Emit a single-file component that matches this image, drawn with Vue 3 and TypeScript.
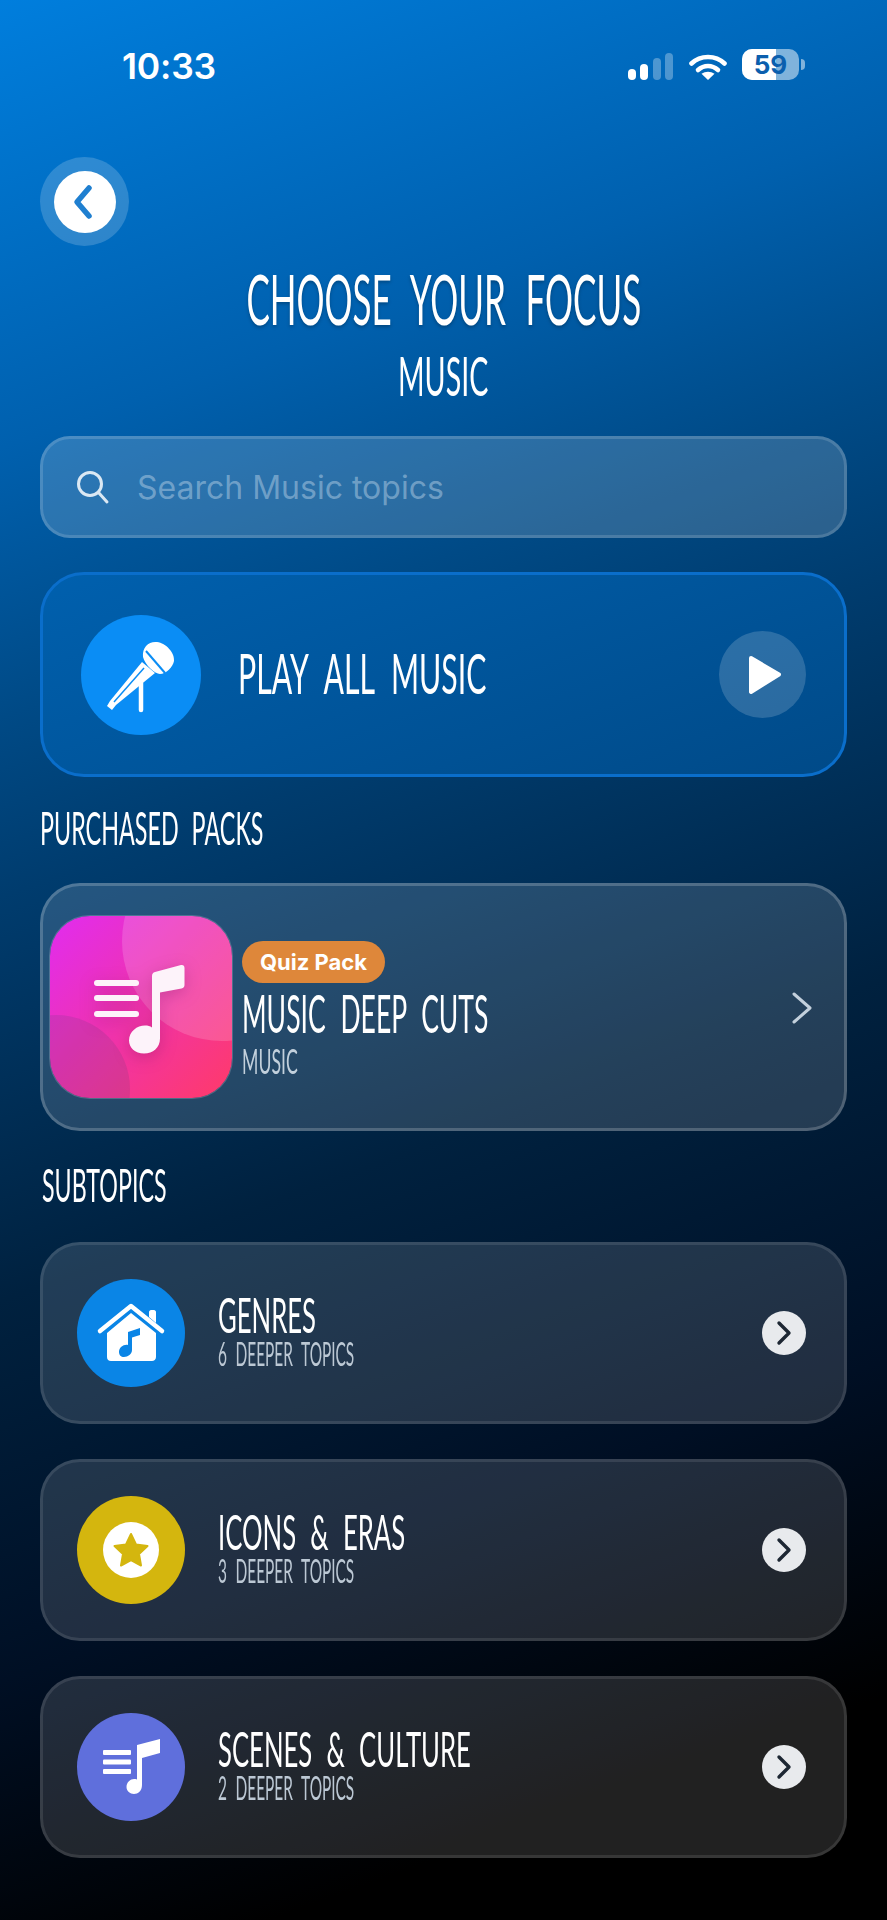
<script setup lang="ts">
interface Topic {
  title: string
  sub: string
  icon: 'home' | 'star' | 'list'
}

const topics: Topic[] = [
  { title: 'GENRES', sub: '6 DEEPER TOPICS', icon: 'home' },
  { title: 'ICONS & ERAS', sub: '3 DEEPER TOPICS', icon: 'star' },
  { title: 'SCENES & CULTURE', sub: '2 DEEPER TOPICS', icon: 'list' }
]
</script>

<template>
  <div class="screen">
    <div class="status">
      <span class="time">10:33</span>
      <div class="status-icons">
        <div class="signal"><i></i><i></i><i class="dim"></i><i class="dim"></i></div>
        <svg class="wifi" width="38" height="26" viewBox="0 0 38 26" fill="none" stroke="#fff" stroke-linecap="round">
          <path d="M2.5 9.5C11.5 .8 26.5 .8 35.5 9.5" stroke-width="4.6" />
          <path d="M9 16c6-5.400 14-5.400 20 0" stroke-width="4.6" />
          <path d="M19 26l-6.500-6.200c3.800-2.800 9.200-2.800 13 0z" fill="#fff" stroke="none" />
        </svg>
        <div class="battery"><span class="fill"></span><b>59</b></div>
        <span class="nub"></span>
      </div>
    </div>

    <button class="back" aria-label="Back">
      <span class="back-inner">
        <svg width="24" height="36" viewBox="0 0 24 36" fill="none" stroke="#1f7fd0" stroke-width="5.500" stroke-linecap="round" stroke-linejoin="round">
          <path d="M18 4L6 18l12 14" />
        </svg>
      </span>
    </button>

    <header class="heading">
      <h1 class="hand title">CHOOSE YOUR FOCUS</h1>
      <h2 class="hand subtitle">MUSIC</h2>
    </header>

    <div class="search">
      <svg width="36" height="36" viewBox="0 0 36 36" fill="none" stroke="#dbe8f3" stroke-width="3" stroke-linecap="round">
        <circle cx="16" cy="15" r="11.500" />
        <path d="M24.500 23.500L33 33" />
      </svg>
      <span class="placeholder">Search Music topics</span>
    </div>

    <div class="play-card">
      <span class="mic">
        <svg width="120" height="120" viewBox="0 0 120 120" fill="none">
          <path d="M60 68V95" stroke="#fff" stroke-width="4.500" stroke-linecap="round" />
          <path d="M61 47L74 58L35 90L31 95L26 91L29 86z" fill="#fff" />
          <path d="M63 53L33 87" stroke="#0a8df5" stroke-width="1.500" />
          <path d="M62 42C61 32 68 26 76 27C85 28 94 38 93 46C92 52 85 59 79 59C74 59 64 50 62 42z" fill="#fff" />
          <path d="M65 36L84 58" stroke="#0a8df5" stroke-width="2" />
        </svg>
      </span>
      <span class="hand play-label">PLAY ALL MUSIC</span>
      <span class="play-btn">
        <svg width="34" height="40" viewBox="0 0 34 40"><path d="M3 3L31 19.500L3 37z" fill="#fff" stroke="#fff" stroke-width="4" stroke-linejoin="round" /></svg>
      </span>
    </div>

    <h3 class="hand section purchased">PURCHASED PACKS</h3>

    <div class="pack-card">
      <div class="art">
        <span class="blob-a"></span>
        <span class="blob-b"></span>
        <svg class="art-icon" width="182" height="182" viewBox="0 0 182 182">
          <g fill="#fdf3fa">
            <rect x="44" y="64" width="45" height="6" rx="3" />
            <rect x="44" y="79" width="45" height="6" rx="3" />
            <rect x="44" y="95" width="45" height="6" rx="3" />
            <path d="M102 60c0-2 1-3.500 3-4l26-7c2-.5 3.500 .5 3.500 3v17c0 2-1 3-3 3.500l-21.500 4v46c0 9-7 15-16 15c-9 0-15-6-15-13c0-9 8-15 16-15c3 0 5 .5 7 2z" />
          </g>
        </svg>
      </div>
      <div class="pack-text">
        <span class="badge">Quiz Pack</span>
        <span class="hand pack-title">MUSIC DEEP CUTS</span>
        <span class="hand pack-sub">MUSIC</span>
      </div>
      <svg class="pack-arrow" width="24" height="36" viewBox="0 0 24 36" fill="none" stroke="#c3d0dc" stroke-width="3" stroke-linecap="round" stroke-linejoin="round">
        <path d="M4 4L20 18L4 32" />
      </svg>
    </div>

    <h3 class="hand section subtopics">SUBTOPICS</h3>

    <div class="topics">
      <div v-for="topic in topics" :key="topic.title" class="topic">
        <span class="topic-icon" :class="topic.icon">
          <svg v-if="topic.icon === 'home'" width="108" height="108" viewBox="0 0 108 108">
            <path d="M23 52L54 27L85 52" fill="none" stroke="#fff" stroke-width="4.500" stroke-linecap="round" stroke-linejoin="round" />
            <path d="M72 38V33c0-1 1-2 2-2h3c1 0 2 1 2 2v11z" fill="#fff" />
            <path fill-rule="evenodd" d="M54 34L79 54V78c0 2.500-2 4-4 4H34c-2.500 0-4-1.500-4-4V54zM51 53V66c-4-1-9 2-9 7c0 3 2 5 5 5c4 0 8-3 8-7V58.500l8-2.500V49z" fill="#fff" />
          </svg>
          <svg v-else-if="topic.icon === 'star'" width="108" height="108" viewBox="0 0 108 108">
            <circle cx="54" cy="54" r="28" fill="#fff" />
            <path d="M54 38l5 10.500l11.500 1.500l-8.500 8l2 11.500l-10-5.500l-10 5.500l2-11.500l-8.500-8l11.500-1.500z" fill="#d4b60e" stroke="#d4b60e" stroke-width="2" stroke-linejoin="round" />
          </svg>
          <svg v-else width="108" height="108" viewBox="0 0 108 108">
            <g fill="#fff">
              <rect x="26" y="37" width="28" height="5" rx="1" />
              <rect x="26" y="46.500" width="28" height="5" rx="1" />
              <rect x="26" y="56" width="28" height="5" rx="1" />
              <path d="M60 32l23-6v14l-18 5V72c0 6-4 9-8 9c-4 0-7.500-3-7.500-7c0-5 4-8 7.500-8c1 0 2 0 3 .5z" />
            </g>
          </svg>
        </span>
        <div class="topic-text">
          <span class="hand topic-title">{{ topic.title }}</span>
          <span class="hand topic-sub">{{ topic.sub }}</span>
        </div>
        <span class="go">
          <svg width="18" height="26" viewBox="0 0 18 26" fill="none" stroke="#1d2733" stroke-width="3.400" stroke-linecap="round" stroke-linejoin="round">
            <path d="M4 3L14 13L4 23" />
          </svg>
        </span>
      </div>
    </div>
  </div>
</template>

<style>
html, body { margin: 0; background: #000; }
</style>

<style scoped>
.screen {
  box-sizing: border-box;
  width: 887px;
  height: 1920px;
  padding: 0 40px;
  overflow: hidden;
  display: flex;
  flex-direction: column;
  background: linear-gradient(160deg, #007edd 0%, #0060ae 20%, #004a86 32%, #003c6e 40%, #00213f 58%, #000f24 75%, #000 90%);
  color: #fff;
  font-family: "Inter", "Liberation Sans", sans-serif;
}

.status { display: flex; justify-content: space-between; align-items: flex-start; height: 157px; padding: 49px 42px 0 82px; box-sizing: border-box; flex: none; }
.time { font-size: 35.500px; font-weight: 600; line-height: 34px; margin-top: 1px; letter-spacing: -.2px; }
.status-icons { display: flex; align-items: flex-end; height: 31px; position: relative; }
.signal { display: flex; align-items: flex-end; gap: 4.500px; margin-top: 2px; }
.signal i { display: block; width: 8px; background: #fff; border-radius: 4px; }
.signal i:nth-child(1) { height: 11px; }
.signal i:nth-child(2) { height: 16px; }
.signal i:nth-child(3) { height: 22px; }
.signal i:nth-child(4) { height: 27px; }
.signal i.dim { background: rgba(255, 255, 255, .3); }
.wifi { margin: 0 15px 0 16px; }
.battery { position: relative; width: 57px; height: 31px; border-radius: 10px; background: rgba(255, 255, 255, .5); overflow: hidden; display: flex; align-items: center; justify-content: center; }
.battery .fill { position: absolute; left: 0; top: 0; bottom: 0; width: 34px; background: #fff; }
.battery b { position: relative; font-size: 26px; line-height: 31px; color: #0b5fae; font-weight: 700; }
.nub { width: 4px; height: 11px; margin: 0 0 10px 2px; background: rgba(255, 255, 255, .5); border-radius: 0 4px 4px 0; }

.back { flex: none; width: 89px; height: 89px; padding: 0; border: none; border-radius: 50%; background: rgba(255, 255, 255, .18); display: flex; align-items: center; justify-content: center; }
.back-inner { width: 62px; height: 62px; border-radius: 50%; background: #fff; display: flex; align-items: center; justify-content: center; }
.back-inner svg { margin-right: 3px; }

.hand {
  display: block;
  font-family: "Lato", "Liberation Sans", sans-serif;
  font-weight: 400;
  margin: 0;
  white-space: nowrap;
  word-spacing: .3em;
  transform-origin: left center;
}

.heading { flex: none; margin-top: 10px; height: 164px; display: flex; flex-direction: column; align-items: center; }
.title { font-size: 70px; line-height: 84px; transform: scaleX(.5); transform-origin: center; text-shadow: 0 2px 5px rgba(0, 0, 0, .25); }
.subtitle { font-size: 54px; line-height: 52px; margin-top: 10px; transform: scaleX(.53); transform-origin: center; }

.search { flex: none; box-sizing: border-box; height: 102px; margin-top: 16px; padding: 0 31px; display: flex; align-items: center; gap: 27px; border: 3px solid rgba(255, 255, 255, .15); border-radius: 30px; background: rgba(255, 255, 255, .17); }
.placeholder { font-size: 32px; color: rgba(170, 200, 225, .55); }

.play-card { flex: none; box-sizing: border-box; height: 205px; margin-top: 34px; padding: 0 38px; display: flex; align-items: center; border: 3px solid #0a6ecb; border-radius: 44px; background: linear-gradient(160deg, #0060ae, #004a88); }
.mic { flex: none; width: 120px; height: 120px; border-radius: 50%; background: #0a8df5; }
.play-label { flex: 1; margin: 0 0 4px 37px; font-size: 56px; line-height: 60px; transform: scaleX(.54); }
.play-btn { flex: none; width: 87px; height: 87px; border-radius: 50%; background: rgba(255, 255, 255, .17); display: flex; align-items: center; justify-content: center; padding-left: 4px; box-sizing: border-box; }

.section { flex: none; font-size: 46px; line-height: 54px; transform: scaleX(.507); }
.purchased { margin-top: 24px; }
.subtopics { margin-top: 27px; margin-left: 2px; transform: scaleX(.505); }

.pack-card { flex: none; box-sizing: border-box; height: 248px; margin-top: 28px; padding: 0 7px; display: flex; align-items: center; position: relative; border: 3px solid rgba(255, 255, 255, .2); border-radius: 40px; background: rgba(255, 255, 255, .14); }
.art { flex: none; position: relative; width: 182px; height: 182px; border-radius: 40px; overflow: hidden; background: linear-gradient(135deg, #e12cf0, #ff3a68); box-shadow: 0 0 0 1px rgba(255, 255, 255, .2); }
.blob-a { position: absolute; left: 72px; top: -75px; width: 200px; height: 200px; border-radius: 50%; background: rgba(255, 255, 255, .16); }
.blob-b { position: absolute; left: -68px; top: 99px; width: 148px; height: 148px; border-radius: 50%; background: rgba(80, 60, 120, .16); }
.art-icon { position: absolute; left: 0; top: 0; filter: drop-shadow(0 4px 8px rgba(120, 20, 90, .3)); }
.pack-text { margin-left: 10px; padding-top: 4px; flex: 1; display: flex; flex-direction: column; align-items: flex-start; }
.badge { height: 42px; padding: 0 18px; display: flex; align-items: center; border-radius: 21px; background: #de873a; font-size: 22px; font-weight: 700; }
.pack-title { font-size: 52px; line-height: 56px; margin-top: 2px; transform: scaleX(.51); }
.pack-sub { font-size: 35px; line-height: 36px; margin-top: 1px; transform: scaleX(.505); color: #c2d0dc; }
.pack-arrow { position: absolute; right: 30px; top: 104px; }

.topics { flex: none; display: flex; flex-direction: column; gap: 35px; margin-top: 30px; }
.topic { box-sizing: border-box; height: 182px; padding: 0 38px 0 34px; display: flex; align-items: center; border: 3px solid rgba(255, 255, 255, .1); border-radius: 40px; background: rgba(255, 255, 255, .13); }
.topic-icon { flex: none; width: 108px; height: 108px; border-radius: 50%; display: block; }
.topic-icon svg { display: block; }
.topic-icon.home { background: #0a85e6; }
.topic-icon.star { background: #d4b60e; }
.topic-icon.list { background: #5f6fdc; }
.topic-text { flex: 1; margin: 0 0 6px 33px; min-width: 0; }
.topic-title { font-size: 48px; line-height: 50px; transform: scaleX(.535); }
.topic-sub { font-size: 32px; line-height: 32px; margin-top: -2px; transform: scaleX(.482); color: #bcc8d4; }
.go { flex: none; width: 44px; height: 44px; border-radius: 50%; background: #e8eaed; display: flex; align-items: center; justify-content: center; }
</style>
